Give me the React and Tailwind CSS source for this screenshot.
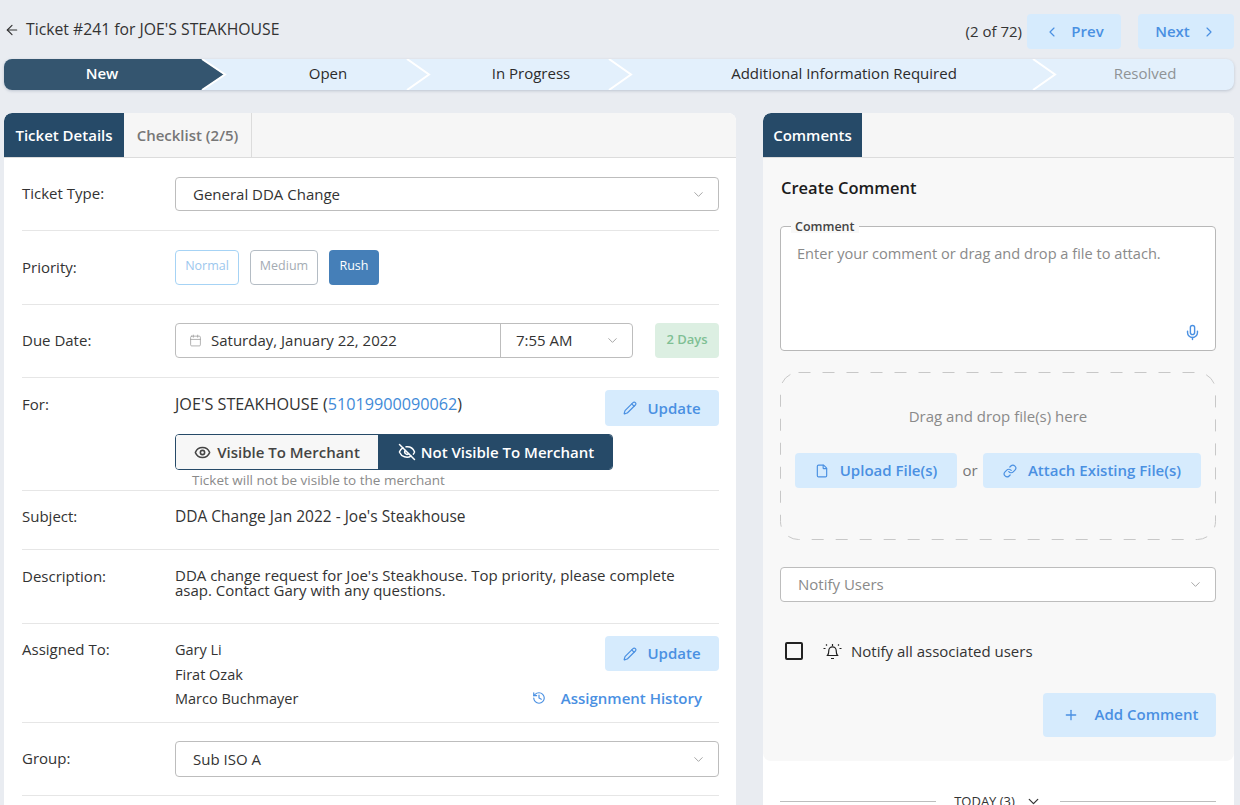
import React from 'react';
import { ArrowLeft, Calendar, ChevronDown, ChevronLeft, ChevronRight, Eye, EyeOff, File, History, Link, Mic, Pencil, Plus } from 'lucide-react';

const font = "font-['Open_Sans','Noto_Sans',sans-serif]";

function Chevron({ color = '#ffffff' }) {
	return (
		<svg className="absolute right-[-1px] top-0 z-10" width="25" height="31" viewBox="0 0 25 31" fill="none">
			<path d="M1 0 L23 15.5 L1 31" stroke={color} strokeWidth="2" />
		</svg>
	);
}

function Step({ label, width, muted }) {
	return (
		<div className={`relative flex h-full items-center justify-center pb-[2px] text-[15px] ${width} ${muted ? 'text-[#8f9396]' : 'text-[#2b2b2b]'}`}>
			{label}
		</div>
	);
}

function Stepper() {
	return (
		<div className="flex h-[31px] w-[1230px] rounded-lg bg-[#e3f0fc] shadow-[0_1px_3px_rgba(60,80,110,0.25)]">
			<div className="relative h-full w-[222px] shrink-0">
				<div className="flex h-full items-center justify-center rounded-l-lg bg-[#34556f] pb-[2px] pr-[26px] text-[15px] font-semibold text-white [clip-path:polygon(0_0,198px_0,220px_50%,198px_100%,0_100%)]">
					New
				</div>
				<svg className="absolute left-[197px] top-0" width="28" height="31" viewBox="0 0 28 31" fill="none">
					<path d="M1 0 L24 15.5 L1 31" stroke="#ffffff" strokeWidth="2" />
				</svg>
			</div>
			<div className="relative w-[204px] shrink-0">
				<Step label="Open" width="w-full" />
				<Chevron />
			</div>
			<div className="relative w-[202px] shrink-0">
				<Step label="In Progress" width="w-full" />
				<Chevron />
			</div>
			<div className="relative w-[424px] shrink-0">
				<Step label="Additional Information Required" width="w-full" />
				<Chevron />
			</div>
			<Step label="Resolved" width="flex-1" muted />
		</div>
	);
}

function Row({ label, children, className = '' }) {
	return (
		<div className={`flex border-b border-[#e6e6e6] ${className}`}>
			<div className="w-[153px] shrink-0 text-[15px] text-[#333]">{label}</div>
			<div className="min-w-0 flex-1">{children}</div>
		</div>
	);
}

function SelectBox({ value, className = '' }) {
	return (
		<div className={`flex items-center justify-between rounded border border-[#bdbdbd] bg-white pl-[17px] pr-[12px] text-[15px] text-[#333] ${className}`}>
			<span>{value}</span>
			<ChevronDown size={15} strokeWidth={1.5} className="text-[#a0a0a0]" />
		</div>
	);
}

function UpdateButton({ className = 'h-[36px]' }) {
	return (
		<button className={`flex w-[114px] items-center justify-center gap-[10px] rounded bg-[#d6ebfd] text-[15px] font-semibold text-[#4a90e2] ${className}`}>
			<Pencil size={14} strokeWidth={2} />
			Update
		</button>
	);
}

function TicketDetails() {
	return (
		<div className="h-[700px] w-[732px] shrink-0 overflow-hidden rounded-t-lg bg-white">
			<div className="flex h-[45px] border-b border-[#dcdcdc] bg-[#f6f6f6]">
				<div className="flex w-[120px] items-center justify-center rounded-tl-lg bg-[#264a68] text-[15px] font-semibold text-white">Ticket Details</div>
				<div className="flex w-[128px] items-center justify-center border-r border-[#dcdcdc] text-[15px] font-semibold text-[#777]">Checklist (2/5)</div>
			</div>
			<div className="pl-[18px] pr-[17px]">
				<Row label={<div className="pt-[5px]">Ticket Type:</div>} className="h-[73px] pt-[19px]">
					<SelectBox value="General DDA Change" className="h-[34px]" />
				</Row>
				<Row label={<div className="pt-[6px]">Priority:</div>} className="h-[74px] pt-[19px]">
					<div className="flex gap-[11px]">
						<button className="h-[35px] w-[64px] rounded border border-[#a6d3f5] pb-[2px] text-[12.5px] text-[#9cc7ee]">Normal</button>
						<button className="h-[35px] w-[68px] rounded border border-[#b4bcc4] pb-[2px] text-[12.5px] text-[#a4abb3]">Medium</button>
						<button className="h-[35px] w-[50px] rounded bg-[#457fb8] pb-[2px] text-[12.5px] text-white">Rush</button>
					</div>
				</Row>
				<Row label={<div className="pt-[6px]">Due Date:</div>} className="h-[73px] pt-[18px]">
					<div className="flex items-center justify-between">
						<div className="flex h-[35px] w-[458px] rounded border border-[#bdbdbd] text-[15px] text-[#333]">
							<div className="flex w-[325px] items-center gap-[9px] border-r border-[#bdbdbd] pl-[13px]">
								<Calendar size={13} strokeWidth={1.5} className="text-[#a0a0a0]" />
								Saturday, January 22, 2022
							</div>
							<div className="flex flex-1 items-center justify-between pl-[15px] pr-[12px]">
								7:55 AM
								<ChevronDown size={15} strokeWidth={1.5} className="text-[#a0a0a0]" />
							</div>
						</div>
						<div className="flex h-[35px] w-[64px] items-center justify-center rounded bg-[#dcefe2] pb-[2px] text-[13px] font-semibold text-[#7fbf94]">2 Days</div>
					</div>
				</Row>
				<Row label={<div className="pt-[3px]">For:</div>} className="h-[113px] pt-[12px]">
					<div className="flex items-start justify-between">
						<div className="pt-[2px] text-[16.2px] text-[#333]">
							JOE'S STEAKHOUSE (<span className="text-[#3f8ad8]">51019900090062</span>)
						</div>
						<UpdateButton />
					</div>
					<div className="mt-[8px] flex h-[36px] w-[438px] overflow-hidden rounded border border-[#264a68] text-[15px] font-semibold">
						<div className="flex w-[202px] items-center justify-center gap-[6px] bg-[#f7f7f7] text-[#444]">
							<Eye size={17} strokeWidth={2.25} />
							Visible To Merchant
						</div>
						<div className="flex flex-1 items-center justify-center gap-[5px] bg-[#264a68] pl-[2px] text-white">
							<EyeOff size={18} strokeWidth={2} />
							Not Visible To Merchant
						</div>
					</div>
					<div className="pl-[17px] pt-[1px] text-[13.5px] leading-[18px] text-[#8a8a8a]">Ticket will not be visible to the merchant</div>
				</Row>
				<Row label="Subject:" className="h-[59px] pt-[14px]">
					<div className="text-[15.5px] text-[#333]">DDA Change Jan 2022 - Joe's Steakhouse</div>
				</Row>
				<Row label="Description:" className="h-[74px] pt-[15px]">
					<div className="w-[505px] pt-[3px] text-[15px] leading-[15px] text-[#333]">DDA change request for Joe's Steakhouse. Top priority, please complete asap. Contact Gary with any questions.</div>
				</Row>
				<Row label={<div className="pt-[14px]">Assigned To:</div>} className="h-[99px]">
					<div className="flex justify-between pt-[12px]">
						<div className="pt-[2px] text-[14.5px] leading-[24.5px] text-[#333]">
							<div>Gary Li</div>
							<div>Firat Ozak</div>
							<div>Marco Buchmayer</div>
						</div>
						<div className="flex flex-col items-end">
							<UpdateButton className="h-[35px]" />
							<div className="mt-[16px] flex items-center gap-[15px] pr-[17px] text-[15px] font-semibold text-[#4a90e2]">
								<History size={14} strokeWidth={2} />
								Assignment History
							</div>
						</div>
					</div>
				</Row>
				<Row label={<div className="pt-[6px]">Group:</div>} className="h-[73px] pt-[18px]">
					<SelectBox value="Sub ISO A" className="h-[36px]" />
				</Row>
			</div>
		</div>
	);
}

function CommentsPanel() {
	return (
		<div className="h-[700px] w-[471px] shrink-0 overflow-hidden rounded-t-lg bg-white">
			<div className="rounded-b-lg bg-[#f8f8f8] pb-[24px]">
				<div className="flex h-[45px] border-b border-[#dcdcdc] bg-[#f6f6f6]">
					<div className="flex w-[99px] items-center justify-center rounded-tl-lg bg-[#264a68] text-[15px] font-semibold text-white">Comments</div>
				</div>
				<div className="px-[17px] pr-[18px]">
					<div className="pl-[1px] pt-[18px] text-[16.5px] font-semibold leading-[24px] text-[#1c1c1c]">Create Comment</div>
					<fieldset className="relative mt-[20px] h-[131px] rounded border border-[#b8b8b8] bg-white pl-[16px]">
						<legend className="ml-[-6px] bg-[#f8f8f8] px-[4px] text-[12.5px] font-semibold leading-[13px] text-[#444]">Comment</legend>
						<div className="pt-[10px] text-[14.6px] text-[#8a8a8a]">Enter your comment or drag and drop a file to attach.</div>
						<Mic size={17} strokeWidth={2} className="absolute bottom-[9px] right-[14px] text-[#4a90e2]" />
					</fieldset>
					<div className="relative mt-[21px] h-[168px] px-[15px] pt-[35px]">
						<svg className="absolute inset-0" width="436" height="168" fill="none">
							<rect x="0.5" y="0.5" width="435" height="167" rx="18" stroke="#c8c8c8" strokeDasharray="12 12" />
						</svg>
						<div className="text-center text-[15px] leading-[18px] text-[#8a8a8a]">Drag and drop file(s) here</div>
						<div className="mt-[28px] flex items-center justify-between">
							<button className="flex h-[35px] w-[162px] items-center justify-center gap-[11px] rounded bg-[#d6ebfd] text-[15px] font-semibold text-[#4a90e2]">
								<File size={14} strokeWidth={2} />
								Upload File(s)
							</button>
							<span className="text-[15px] text-[#777]">or</span>
							<button className="flex h-[35px] w-[218px] items-center justify-center gap-[11px] rounded bg-[#d6ebfd] text-[15px] font-semibold text-[#4a90e2]">
								<Link size={14} strokeWidth={2} />
								Attach Existing File(s)
							</button>
						</div>
					</div>
					<SelectBox value={<span className="text-[#8a8a8a]">Notify Users</span>} className="mt-[27px] h-[35px]" />
					<div className="mt-[38px] flex items-center pl-[5px]">
						<div className="h-[18px] w-[18px] rounded-[2px] border-2 border-[#222]" />
						<svg className="ml-[20px]" width="19" height="17" viewBox="0 0 19 17" fill="none" stroke="#222" strokeWidth="1.2">
							<path d="M4.5 12.5c1.2-1.4 1.3-3 1.3-5a3.7 3.7 0 0 1 7.4 0c0 2 .1 3.6 1.3 5z" />
							<path d="M8 15.5h3M9.5 1v2M0.5 5.5h2M16.5 5.5h2M3 1.5l1 1M16 1.5l-1 1" />
						</svg>
						<span className="ml-[9px] text-[15px] text-[#333]">Notify all associated users</span>
					</div>
					<div className="mt-[30px] flex justify-end">
						<button className="flex h-[44px] w-[173px] items-center justify-center gap-[16px] rounded bg-[#d6ebfd] pl-[2px] text-[15px] font-semibold text-[#4a90e2]">
							<Plus size={16} strokeWidth={2} />
							Add Comment
						</button>
					</div>
				</div>
			</div>
			<div className="flex items-center px-[17px] pr-[18px] pt-[31px]">
				<div className="h-[1px] flex-1 bg-[#bdbdbd]" />
				<div className="flex items-center gap-[10px] px-[18px] text-[13px] text-[#333]">
					TODAY (3)
					<ChevronDown size={17} strokeWidth={1.75} />
				</div>
				<div className="h-[1px] flex-1 bg-[#bdbdbd]" />
			</div>
		</div>
	);
}

export default function App() {
	return (
		<div className={`h-[805px] w-[1240px] overflow-hidden bg-[#e9ecf1] pl-[4px] ${font}`}>
			<div className="flex h-[59px] w-[1230px] items-start justify-between">
				<div className="flex items-center gap-[6px] pt-[18px] text-[15.75px] text-[#333]">
					<ArrowLeft size={16} strokeWidth={1.75} />
					Ticket #241 for JOE'S STEAKHOUSE
				</div>
				<div className="flex items-center pt-[14px]">
					<span className="mr-[5px] text-[15px] text-[#333]">(2 of 72)</span>
					<button className="flex h-[35px] w-[94px] items-center justify-center gap-[11px] rounded bg-[#d6ebfd] text-[15px] font-semibold text-[#4a90e2]">
						<ChevronLeft size={16} strokeWidth={1.75} />
						Prev
					</button>
					<button className="ml-[17px] flex h-[35px] w-[96px] items-center justify-center gap-[11px] rounded bg-[#d6ebfd] text-[15px] font-semibold text-[#4a90e2]">
						Next
						<ChevronRight size={16} strokeWidth={1.75} />
					</button>
				</div>
			</div>
			<Stepper />
			<div className="mt-[23px] flex gap-[27px]">
				<TicketDetails />
				<CommentsPanel />
			</div>
		</div>
	);
}
